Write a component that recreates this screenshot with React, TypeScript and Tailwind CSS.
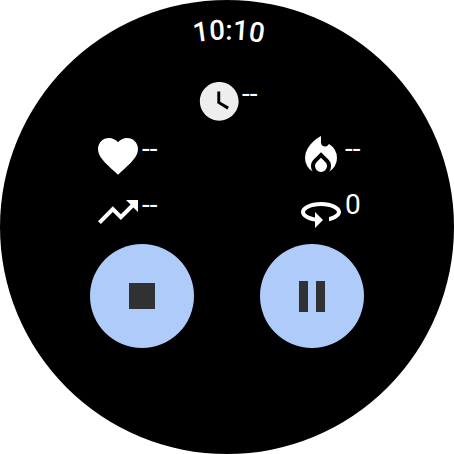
type IconProps = { d: string; viewBox?: string; className?: string };

const CLOCK =
  "M12 2C6.5 2 2 6.5 2 12s4.5 10 10 10 10-4.5 10-10S17.5 2 12 2zm4.2 14.2L11 13V7h1.5v5.2l4.5 2.7-.8 1.3z";
const HEART =
  "M12 21.35l-1.45-1.32C5.4 15.36 2 12.28 2 8.5 2 5.42 4.42 3 7.5 3c1.74 0 3.41.81 4.5 2.09C13.09 3.81 14.76 3 16.5 3 19.58 3 22 5.42 22 8.5c0 3.78-3.4 6.86-8.55 11.54L12 21.35z";
const FLAME =
  "M160-400q0-105 50-187t110-138q60-56 110-85.5l50-29.5v132q0 37 25 58.5t56 21.5q17 0 32.5-7t28.5-23l18-22q72 42 116 116.5T800-400q0 88-43 160.5T644-125q17-24 26.5-52.5T680-238q0-40-15-75.5T622-377L480-516 339-377q-29 29-44 64t-15 75q0 32 9.5 60.5T316-125q-70-42-113-114.5T160-400Zm320-4 85 83q17 17 26 38t9 45q0 49-35 83.5T480-120q-50 0-85-34.5T360-238q0-23 9-44.5t26-38.5l85-83Z";
const TREND =
  "M16 6l2.29 2.29-4.88 4.88-4-4L2 16.59 3.41 18l6-6 4 4 6.3-6.29L22 12V6z";
const LAPS =
  "M12 7C6.48 7 2 9.24 2 12c0 2.24 2.94 4.13 7 4.77V20l4-4-4-4v2.73c-3.15-.56-5-1.9-5-2.73 0-1.06 3.04-3 8-3s8 1.94 8 3c0 .73-1.46 1.89-4 2.53v2.05c3.53-.77 6-2.53 6-4.58 0-2.76-4.48-5-10-5z";

function Icon({ d, viewBox = "0 0 24 24", className = "size-12" }: IconProps) {
  return (
    <svg viewBox={viewBox} className={`shrink-0 ${className}`} fill="currentColor">
      <path d={d} />
    </svg>
  );
}

function Value({ children }: { children: string }) {
  return <span className="block text-[28px] leading-8">{children}</span>;
}

// Time text that follows the curve of the round bezel
function CurvedTime() {
  return (
    <svg viewBox="0 0 454 78" className="block h-[78px] w-full">
      <path id="bezel" d="M39.4 227a187.6 187.6 0 0 1 375.2 0" fill="none" />
      <text
        fill="#fff"
        fontSize="27.5"
        fontWeight="500"
        letterSpacing="-0.1"
        textAnchor="middle"
      >
        <textPath href="#bezel" startOffset="50.3%">
          10:10
        </textPath>
      </text>
    </svg>
  );
}

export default function App() {
  return (
    <div className="size-[454px] overflow-hidden bg-white">
      <main className="size-full overflow-hidden rounded-full bg-black font-['Roboto',sans-serif] text-white">
        <CurvedTime />
        <div className="flex h-[54px] items-start pl-[196px]">
          <Icon d={CLOCK} className="size-[46.5px] text-[#eee]" />
          <div className="-ml-[0.5px]">
            <Value>--</Value>
          </div>
        </div>
        <div className="flex h-14 items-start pl-[94px]">
          <Icon d={HEART} />
          <div className="w-[155px] pt-px">
            <Value>--</Value>
          </div>
          <Icon d={FLAME} viewBox="0 -960 960 960" className="-mt-0.5 size-12" />
          <div className="pt-px">
            <Value>--</Value>
          </div>
        </div>
        <div className="flex h-14 items-start pl-[94px]">
          <Icon d={TREND} />
          <div className="w-[155px] pt-px">
            <Value>--</Value>
          </div>
          <Icon d={LAPS} />
          <div className="pt-px">
            <Value>0</Value>
          </div>
        </div>
        <div className="flex gap-[66px] pl-[90px]">
          <button className="flex size-[104px] items-center justify-center rounded-full bg-[#aecbfa]">
            <span className="size-[26px] bg-[#303133]" />
          </button>
          <button className="flex size-[104px] items-center justify-center gap-2 rounded-full bg-[#aecbfa]">
            <span className="h-[31px] w-[9px] bg-[#303133]" />
            <span className="h-[31px] w-[9px] bg-[#303133]" />
          </button>
        </div>
      </main>
    </div>
  );
}
